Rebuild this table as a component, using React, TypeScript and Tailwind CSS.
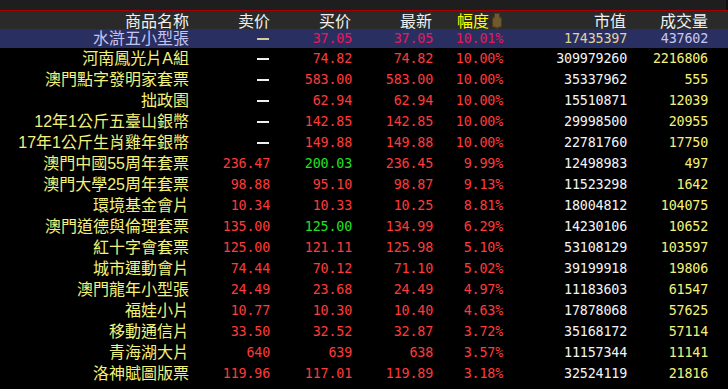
import clsx from "clsx";

type Row = {
  name: string;
  sell: string;
  buy: string;
  last: string;
  pct: string;
  cap: string;
  vol: string;
  buyUp?: boolean;
};

const rows: Row[] = [
  { name: "水滸五小型張", sell: "—", buy: "37.05", last: "37.05", pct: "10.01%", cap: "17435397", vol: "437602" },
  { name: "河南鳳光片A組", sell: "—", buy: "74.82", last: "74.82", pct: "10.00%", cap: "309979260", vol: "2216806" },
  { name: "澳門點字發明家套票", sell: "—", buy: "583.00", last: "583.00", pct: "10.00%", cap: "35337962", vol: "555" },
  { name: "拙政園", sell: "—", buy: "62.94", last: "62.94", pct: "10.00%", cap: "15510871", vol: "12039" },
  { name: "12年1公斤五臺山銀幣", sell: "—", buy: "142.85", last: "142.85", pct: "10.00%", cap: "29998500", vol: "20955" },
  { name: "17年1公斤生肖雞年銀幣", sell: "—", buy: "149.88", last: "149.88", pct: "10.00%", cap: "22781760", vol: "17750" },
  { name: "澳門中國55周年套票", sell: "236.47", buy: "200.03", last: "236.45", pct: "9.99%", cap: "12498983", vol: "497", buyUp: true },
  { name: "澳門大學25周年套票", sell: "98.88", buy: "95.10", last: "98.87", pct: "9.13%", cap: "11523298", vol: "1642" },
  { name: "環境基金會片", sell: "10.34", buy: "10.33", last: "10.25", pct: "8.81%", cap: "18004812", vol: "104075" },
  { name: "澳門道德與倫理套票", sell: "135.00", buy: "125.00", last: "134.99", pct: "6.29%", cap: "14230106", vol: "10652", buyUp: true },
  { name: "紅十字會套票", sell: "125.00", buy: "121.11", last: "125.98", pct: "5.10%", cap: "53108129", vol: "103597" },
  { name: "城市運動會片", sell: "74.44", buy: "70.12", last: "71.10", pct: "5.02%", cap: "39199918", vol: "19806" },
  { name: "澳門龍年小型張", sell: "24.49", buy: "23.68", last: "24.49", pct: "4.97%", cap: "11183603", vol: "61547" },
  { name: "福娃小片", sell: "10.77", buy: "10.30", last: "10.40", pct: "4.63%", cap: "17878068", vol: "57625" },
  { name: "移動通信片", sell: "33.50", buy: "32.52", last: "32.87", pct: "3.72%", cap: "35168172", vol: "57114" },
  { name: "青海湖大片", sell: "640", buy: "639", last: "638", pct: "3.57%", cap: "11157344", vol: "11141" },
  { name: "洛神賦圖版票", sell: "119.96", buy: "117.01", last: "119.89", pct: "3.18%", cap: "32524119", vol: "21816" },
];

const cjk = "font-['Liberation_Sans','Noto_Sans_CJK_TC',sans-serif] text-[16px]";
const num = "font-['DejaVu_Sans_Mono',monospace] text-[13.4px] tracking-[-0.2px]";

function SortMark() {
  return (
    <svg width="12" height="17" viewBox="0 0 12 17" className="ml-[2px]">
      <path d="M3 1h6v3l2 2v9l-5 2-5-2V6l2-2z" fill="#4a3a18" />
      <path d="M4 2h4v3l2 2v7l-4 1.5L2 14V7l2-2z" fill="#6e5a2c" />
    </svg>
  );
}

function DataRow(props: { row: Row; selected: boolean }) {
  const r = props.row;
  const sel = props.selected;
  const red = sel ? "text-[#e8185a]" : "text-[#ff3a3a]";
  return (
    <div
      className={clsx(
        "flex items-center whitespace-nowrap",
        sel ? "h-[18px] bg-[#2a2f62]" : "h-[21px] pt-[1px]"
      )}
    >
      <div
        className={clsx(
          cjk,
          "w-[189px] text-right leading-none",
          sel ? "text-[#c4c4f0]" : "text-[#f2f27a]"
        )}
      >
        {r.name}
      </div>
      <div className={clsx("w-[81px] flex items-center justify-end", num)}>
        {r.sell === "—" ? (
          <span
            className={clsx(
              "block w-[12px] h-[2px] mr-[1px]",
              sel ? "bg-[#d8cc9a]" : "bg-[#f0f0f0]"
            )}
          />
        ) : (
          <span className={red}>{r.sell}</span>
        )}
      </div>
      <div className={clsx(num, "w-[82px] text-right", r.buyUp ? "text-[#22e022]" : red)}>
        {r.buy}
      </div>
      <div className={clsx(num, "w-[81px] text-right", red)}>{r.last}</div>
      <div className={clsx(num, "w-[70px] text-right", red)}>{r.pct}</div>
      <div
        className={clsx(
          num,
          "w-[124px] text-right",
          sel ? "text-[#e0d49a]" : "text-[#f4f4f4]"
        )}
      >
        {r.cap}
      </div>
      <div
        className={clsx(
          num,
          "w-[81px] text-right",
          sel ? "text-[#c8c8f4]" : "text-[#f2f27a]"
        )}
      >
        {r.vol}
      </div>
    </div>
  );
}

export default function App() {
  const head = "font-['Noto_Sans_CJK_SC',sans-serif] text-[16px] leading-none text-right";
  return (
    <div className="w-[728px] h-[389px] bg-black overflow-hidden">
      <div className="h-[10px] bg-[#1e1e1e] border-r-2 border-[#111]" />
      <div className="h-[20px] bg-[#2a2a2a] border-y border-[#a80000] flex items-center whitespace-nowrap text-[#f0f0f0]">
        <div className={clsx(head, "w-[189px]")}>商品名称</div>
        <div className={clsx(head, "w-[81px]")}>卖价</div>
        <div className={clsx(head, "w-[82px] pr-[1px]")}>买价</div>
        <div className={clsx(head, "w-[81px] pr-[1px]")}>最新</div>
        <div className="w-[70px] flex items-center justify-end">
          <span className={clsx(head, "text-[#ffff00]")}>幅度</span>
          <SortMark />
        </div>
        <div className={clsx(head, "w-[124px] pr-[1px]")}>市值</div>
        <div className={clsx(head, "w-[81px]")}>成交量</div>
      </div>
      {rows.map((r, i) => (
        <DataRow key={r.name} row={r} selected={i === 0} />
      ))}
    </div>
  );
}
